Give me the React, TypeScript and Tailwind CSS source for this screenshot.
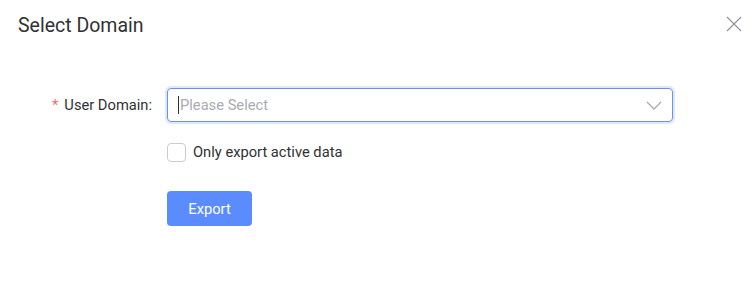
import React from "react";

export default function App() {
  return (
    <div
      className="w-[753px] h-[288px] bg-white relative"
      style={{ fontFamily: "Roboto, 'Noto Sans', sans-serif" }}
    >
      <div className="flex items-start justify-between pl-[18px] pr-[11px] pt-[13px]">
        <div className="text-[19.5px] leading-[26px] text-[#303133]">Select Domain</div>
        <button className="mt-[3px] w-[16px] h-[16px] flex items-center justify-center">
          <svg width="16" height="16" viewBox="0 0 16 16" fill="none">
            <path d="M1 1L15 15M15 1L1 15" stroke="#909399" strokeWidth="1.2" />
          </svg>
        </button>
      </div>

      <div className="mt-[49px] flex items-center">
        <label className="w-[152px] text-right text-[14.7px] text-[#303133]">
          <span className="text-[#f56c6c] mr-[6px]">*</span>User Domain:
        </label>
        <div className="ml-[15px] w-[506px] h-[34px] rounded-[4px] border border-[#6b8ff2] shadow-[0_0_0_2px_#dfe8fd] flex items-center pl-[10px] pr-[10px]">
          <span className="w-px h-[18px] bg-[#303133] mr-[1px]" />
          <span className="flex-1 text-[14.7px] text-[#a8abb2]">Please Select</span>
          <svg width="16" height="9" viewBox="0 0 16 9" fill="none">
            <path d="M1 1L8 8L15 1" stroke="#a8abb2" strokeWidth="1.3" />
          </svg>
        </div>
      </div>

      <div className="mt-[19px] ml-[167px] flex items-center">
        <span className="w-[19px] h-[19px] rounded-[4px] border border-[#c8cbd2] bg-white" />
        <span className="ml-[7px] text-[14.7px] text-[#303133]">Only export active data</span>
      </div>

      <button className="mt-[28px] ml-[167px] w-[85px] h-[35px] rounded-[4px] bg-[#5a8cff] text-white text-[14.7px]">
        Export
      </button>
    </div>
  );
}
